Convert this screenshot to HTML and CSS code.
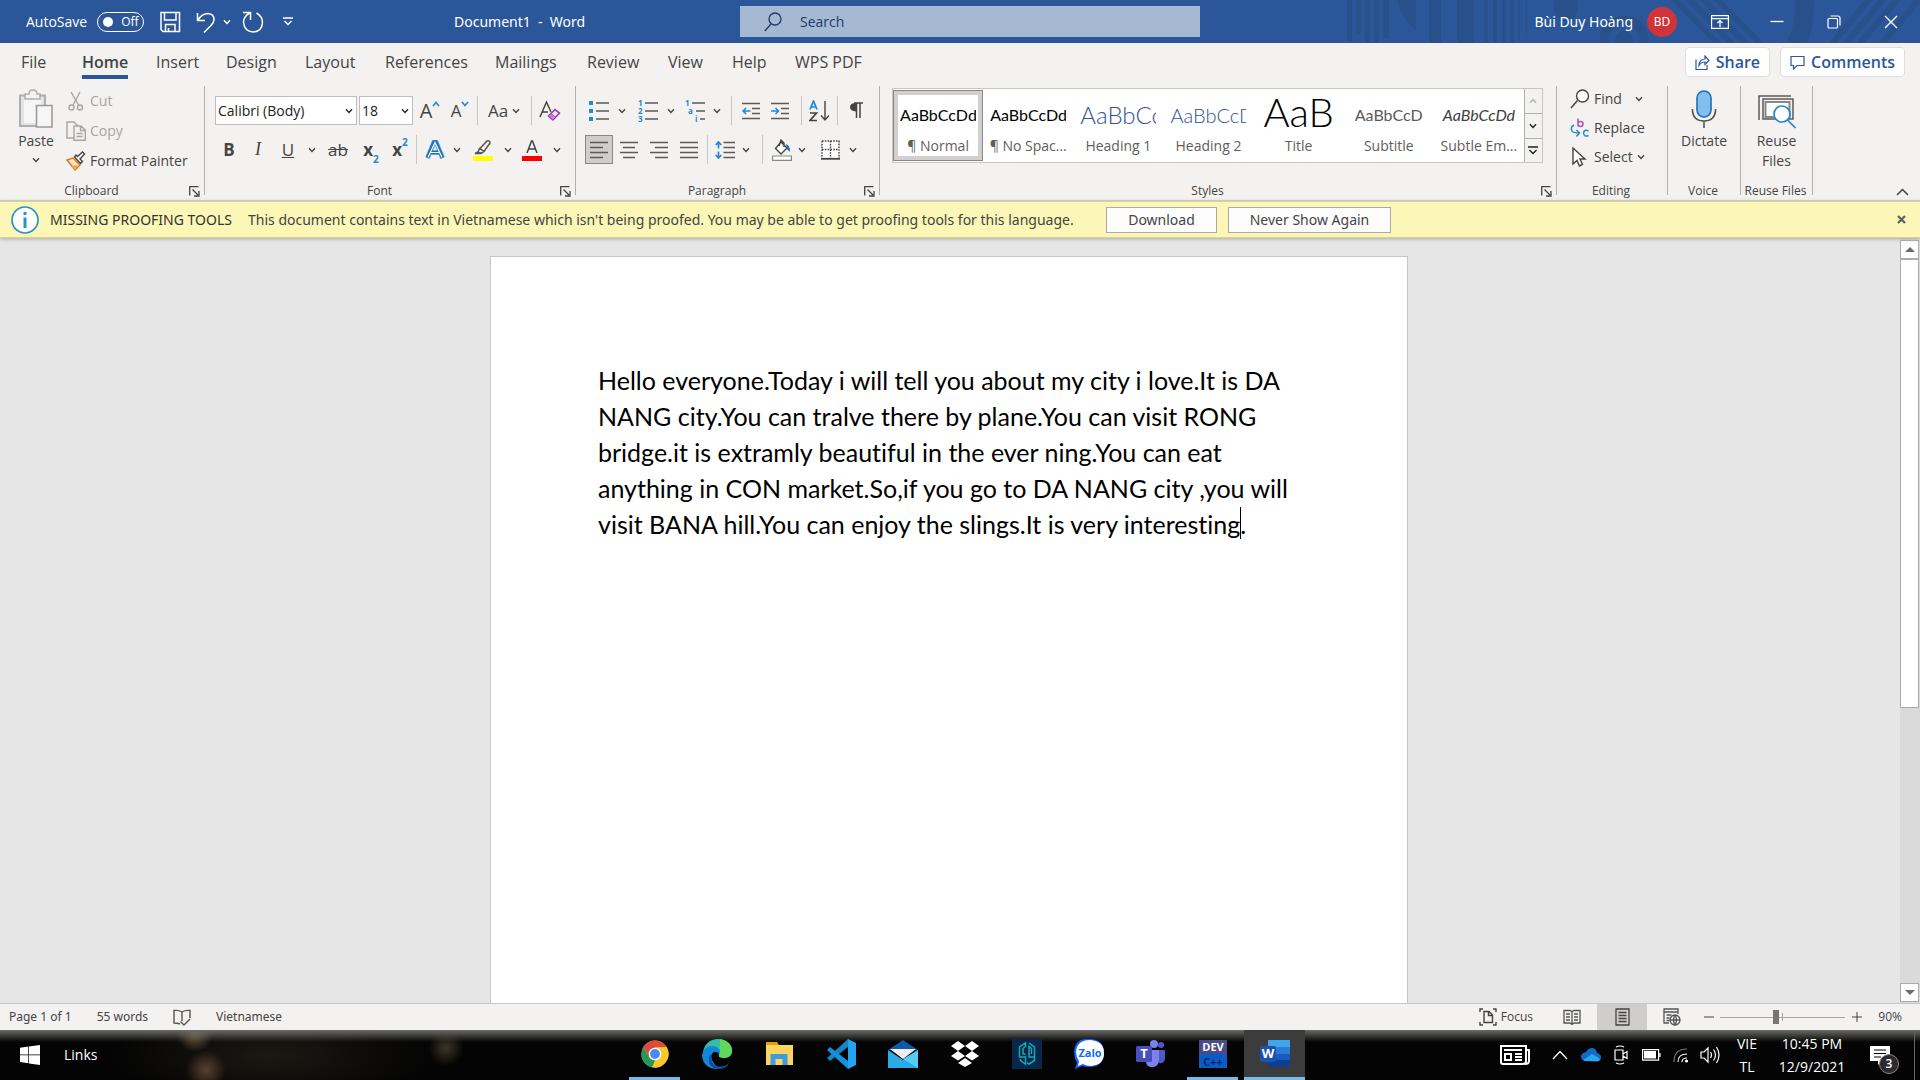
FILE: index.html
```html
<!DOCTYPE html>
<html lang="en">
<head>
<meta charset="utf-8">
<title>Document1 - Word</title>
<link rel="stylesheet" href="styles.css">
</head>
<body>
<svg class="sprite" aria-hidden="true">
  <symbol id="chev" viewBox="0 0 8 6"><path d="M1 1.2 4 4.4 7 1.2" fill="none" stroke="currentColor" stroke-width="1.4"/></symbol>
  <symbol id="launch" viewBox="0 0 11 11"><path d="M.7 9.5V.7h8.800M3.500 3.500l5.500 5.500M10 5v5H5" fill="none" stroke="currentColor" stroke-width="1.300"/></symbol>
</svg>

<header class="titlebar">
  <svg class="pattern" viewBox="0 0 580 43" aria-hidden="true">
    <g fill="#28508a">
      <path d="M7 0h5v41H7zM16 0h5v34h-5zM25 0h5v43h-5zM34 0h5v43h-5zM43 0h6v38h-6zM57 0h19v30Q62 20 57 0zM89 0h12v43H89zM117 0h17v43h-17zM144 0h4v43h-4zM153 0h4v43h-4zM162 0h4v43h-4zM170 0h4v43h-4zM178 0h2v40h-2zM186 0h1v35h-1z"/>
      <path d="M214 0h23q3 18-10 23-15-4-13-23z"/><circle cx="284" cy="40" r="9"/>
    </g>
    <g fill="none" stroke="#28508a">
      <circle cx="284" cy="40" r="20" stroke-width="9"/>
      <path d="M332-4l48 50M346-4l48 50M360-4l48 50M374-4l48 50" stroke-width="6"/>
      <path d="M464-2q2 28-8 47" stroke-width="19"/>
      <path d="M490 46l42-50M504 46l42-50M518 46l42-50M540 46l42-50" stroke-width="6"/>
    </g>
  </svg>
  <div class="quick">
    <label class="autosave">AutoSave <input type="checkbox"><span class="toggle">Off</span></label>
    <button aria-label="Save"><svg width="22" height="22" viewBox="0 0 22 22"><path d="M2 1.500h18.500v19H4l-2-2zM5.500 2v7h11.500V2M6.500 20v-6.500h9.500V20M9.500 20v-3" fill="none" stroke="#fff" stroke-width="1.500"/></svg></button>
    <button aria-label="Undo"><svg width="20" height="22" viewBox="0 0 20 22"><path d="M1.500 2v7.500H9M2 9Q6 2.500 12 2.500q6 .5 6 6 0 3-3 6l-7 7" fill="none" stroke="#fff" stroke-width="1.500"/></svg></button>
    <button aria-label="Undo list"><svg class="chev"><use href="#chev"/></svg></button>
    <button aria-label="Repeat"><svg width="22" height="22" viewBox="0 0 22 22"><path d="M1 1.500h7.500V9M8 2Q1.500 5 1.500 11.500q1 9 9.500 9.500 9-.5 9.500-9.500 0-6-6-9.500" fill="none" stroke="#fff" stroke-width="1.500"/></svg></button>
    <button aria-label="Customize toolbar"><svg width="10" height="9" viewBox="0 0 10 9"><path d="M0 1h10M1.500 4 5 7.500 8.500 4" fill="none" stroke="#fff" stroke-width="1.400"/></svg></button>
  </div>
  <h1 class="doctitle">Document1&nbsp; -&nbsp; Word</h1>
  <label class="search"><svg width="18" height="20" viewBox="0 0 18 20"><circle cx="11" cy="7" r="6" fill="none" stroke="#1c3a6b" stroke-width="1.300"/><path d="M7 12 .800 19" stroke="#1c3a6b" stroke-width="1.300"/></svg><input type="text" placeholder="Search" aria-label="Search"></label>
  <div class="account">
    <span>Bùi Duy Hoàng</span><span class="avatar">BD</span>
  </div>
  <div class="winctl">
    <button aria-label="Ribbon display options"><svg width="18" height="14" viewBox="0 0 18 14" fill="none" stroke="#fff" stroke-width="1.200"><path d="M.6.600h16.800v12.800H.6zM.6 3.600h16.800M9 12V6M6.500 8 9 5.600 11.500 8"/></svg></button>
    <button aria-label="Minimize"><svg width="14" height="14" viewBox="0 0 14 14"><path d="M.5 6.500h13" stroke="#fff" stroke-width="1.300"/></svg></button>
    <button aria-label="Restore"><svg width="14" height="14" viewBox="0 0 14 14" fill="none" stroke="#fff" stroke-width="1.200"><rect x="1" y="3.500" width="9.500" height="9.500" rx="1"/><path d="M3.500 1h7.500q2 0 2 2v7.500"/></svg></button>
    <button aria-label="Close"><svg width="14" height="14" viewBox="0 0 14 14"><path d="M1 1l12 12M13 1 1 13" stroke="#fff" stroke-width="1.300"/></svg></button>
  </div>
</header>

<nav class="tabs">
  <div class="tablist">
    <a href="#">File</a><a href="#" class="active">Home</a><a href="#">Insert</a><a href="#">Design</a><a href="#">Layout</a><a href="#">References</a><a href="#">Mailings</a><a href="#">Review</a><a href="#">View</a><a href="#">Help</a><a href="#">WPS PDF</a>
  </div>
  <div class="tabactions">
    <button class="pill"><svg width="15" height="15" viewBox="0 0 15 15" fill="none" stroke="#2b579a" stroke-width="1.200"><path d="M1 4.500v10h11V10M4 10.500q0-6 6-6.500V1l4 4.500-4 4V7Q6 7 4 10.500z"/></svg>Share</button>
    <button class="pill"><svg width="15" height="15" viewBox="0 0 15 15" fill="none" stroke="#2b579a" stroke-width="1.200"><path d="M1 1.500h13v9H7L3.500 14v-3.500H1z"/></svg>Comments</button>
  </div>
</nav>

<section class="ribbon">
  <div class="group clipboard">
    <div class="clip-body">
      <button class="big paste">
        <svg width="36" height="40" viewBox="0 0 36 40"><path d="M2 6.500h25V37H2z" fill="#e4e3e2" stroke="#aeaeae" stroke-width="2"/><path d="M6 10h17v24H6z" fill="#f6f6f6"/><path d="M7 5h4q0-4 4-4t4 4h3v5H7z" fill="#f3f2f1" stroke="#aeaeae" stroke-width="1.500"/><path d="M18.500 16.500h15.500v21.500H18.500z" fill="#f6f6f6" stroke="#9b9b9b" stroke-width="1.600"/></svg>
        <span>Paste</span><svg class="chev"><use href="#chev"/></svg>
      </button>
      <div class="clip-list">
        <button class="cmd off"><svg width="20" height="20" viewBox="0 0 20 20" fill="none" stroke="#a6a6a6" stroke-width="1.400"><path d="M5 1l7.500 13M14 1 7 14"/><circle cx="5.500" cy="16.500" r="2.500"/><circle cx="14" cy="16.500" r="2.500"/></svg>Cut</button>
        <button class="cmd off"><svg width="20" height="20" viewBox="0 0 20 20" fill="#f3f2f1" stroke="#a6a6a6" stroke-width="1.400"><path d="M1 1h7l3 3v13H1z"/><path d="M8 5h7l4.300 4v10.300H8zM14.500 5v4.500H19M10.500 12.500h6M10.500 15.500h6"/></svg>Copy</button>
        <button class="cmd"><svg width="20" height="20" viewBox="0 0 20 20"><path d="M1 9l6-2 7 7-5 5z" fill="#fbe3c8" stroke="#e07a1c" stroke-width="1.500"/><path d="M5 15l7-1-3 5z" fill="#f0a850"/><path d="M8.500 6l6 6.500 2-2-2.500-2.500 4.500-5-2-2-5 4.500-1.500-1.500z" fill="#fff" stroke="#444" stroke-width="1.400"/></svg>Format Painter</button>
      </div>
    </div>
    <div class="caption"><span>Clipboard</span><button aria-label="Clipboard options"><svg class="launch"><use href="#launch"/></svg></button></div>
  </div>

  <div class="group font">
    <div class="rows">
      <div class="row font-a">
        <span class="combo"><select aria-label="Font"><option>Calibri (Body)</option></select><svg class="chev"><use href="#chev"/></svg></span>
        <span class="combo"><select aria-label="Font size"><option>18</option></select><svg class="chev"><use href="#chev"/></svg></span>
        <button aria-label="Grow font"><span class="glyph g-xl">A</span><svg class="hat" viewBox="0 0 8 6"><path d="M1 5 4 1.500 7 5" fill="none" stroke="#2488d0" stroke-width="1.600"/></svg></button>
        <button aria-label="Shrink font"><span class="glyph g-l">A</span><svg class="hat" viewBox="0 0 8 6"><path d="M1 1 4 4.500 7 1" fill="none" stroke="#2488d0" stroke-width="1.600"/></svg></button>
        <i class="sep"></i>
        <button class="case" aria-label="Change case"><span class="glyph g-l">Aa</span><svg class="chev"><use href="#chev"/></svg></button>
        <i class="sep"></i>
        <button aria-label="Clear formatting"><svg width="22" height="22" viewBox="0 0 22 22"><path d="M1 17 7.500 2 12 12M3.500 12H9" fill="none" stroke="#444" stroke-width="1.500"/><path d="M9.500 16l6.500-6.500 4.500 3.500-6.500 7z" fill="#f3e3f8" stroke="#9b3ab0" stroke-width="1.600"/><path d="M9.500 16l2.500-2.500 4.500 4-2.500 2.500z" fill="#c88ad6" stroke="#9b3ab0"/></svg></button>
      </div>
      <div class="row font-b">
        <button aria-label="Bold"><b class="glyph">B</b></button>
        <button aria-label="Italic"><em class="glyph serif">I</em></button>
        <button aria-label="Underline"><u class="glyph">U</u></button>
        <button aria-label="Underline style"><svg class="chev"><use href="#chev"/></svg></button>
        <button aria-label="Strikethrough"><s class="glyph">ab</s></button>
        <button aria-label="Subscript"><b class="glyph">x</b><sub>2</sub></button>
        <button aria-label="Superscript"><b class="glyph">x</b><sup>2</sup></button>
        <i class="sep"></i>
        <button aria-label="Text effects"><svg width="20" height="20" viewBox="0 0 20 20" fill="none"><path d="M2.500 18 9 2h2l6.500 16M5.500 12.500h9" stroke="#7db9ea" stroke-width="5"/><path d="M2.500 18 9 2h2l6.500 16M5.500 12.500h9" stroke="#1c6fb8" stroke-width="3.600"/><path d="M3 17.500 10 2.500l7 15M6 12.500h8" stroke="#fff" stroke-width="1.200"/></svg></button>
        <button aria-label="Text effects list"><svg class="chev"><use href="#chev"/></svg></button>
        <button aria-label="Highlight colour"><svg width="20" height="22" viewBox="0 0 20 22"><path d="M7 9.500 14 2q3-1 3 2l-6 8.500zM6.500 9.500 5 13l-3 1.500h6l3-2z" fill="#f3f2f1" stroke="#555" stroke-width="1.500"/><path d="M5 12.500l4 1-1 1H2z" fill="#555"/><path d="M0 17h20v5H0z" fill="#ff0"/></svg></button>
        <button aria-label="Highlight list"><svg class="chev"><use href="#chev"/></svg></button>
        <button aria-label="Font colour"><svg width="20" height="22" viewBox="0 0 20 22"><path d="M5 14 9.500 2h1L15 14M6.500 10h7" fill="none" stroke="#444" stroke-width="1.500"/><path d="M0 17h20v5H0z" fill="red"/></svg></button>
        <button aria-label="Font colour list"><svg class="chev"><use href="#chev"/></svg></button>
      </div>
    </div>
    <div class="caption"><span>Font</span><button aria-label="Font options"><svg class="launch"><use href="#launch"/></svg></button></div>
  </div>

  <div class="group para">
    <div class="rows">
      <div class="row para-a">
        <button aria-label="Bullets"><svg width="20" height="20" viewBox="0 0 20 20"><path d="M0 0h4v4H0zM0 8h4v4H0zM0 16h4v4H0z" fill="#2488d0"/><path d="M7 2h13M7 10h13M7 18h13" stroke="#5d5b59" stroke-width="1.500"/></svg></button>
        <button aria-label="Bullet list"><svg class="chev"><use href="#chev"/></svg></button>
        <button aria-label="Numbering"><svg class="nums" width="20" height="22" viewBox="0 0 20 22"><text x="0" y="6">1</text><text x="0" y="14">2</text><text x="0" y="22">3</text><path d="M7 3h13M7 11h13M7 19h13" stroke="#5d5b59" stroke-width="1.500"/></svg></button>
        <button aria-label="Number list"><svg class="chev"><use href="#chev"/></svg></button>
        <button aria-label="Multilevel list"><svg class="nums" width="20" height="22" viewBox="0 0 20 22"><text x="0" y="6">1</text><text x="3" y="14">a</text><text x="10" y="22">i</text><path d="M7 3h13M11 11h9M15 19h5" stroke="#5d5b59" stroke-width="1.500"/></svg></button>
        <button aria-label="Multilevel choices"><svg class="chev"><use href="#chev"/></svg></button>
        <i class="sep"></i>
        <button aria-label="Decrease indent"><svg width="18" height="18" viewBox="0 0 18 18" fill="none" stroke="#5d5b59" stroke-width="1.500"><path d="M0 1.500h18M10 6.500h8M10 11.500h8M0 16.500h18"/><path d="M8.500 9H1M4 6 1 9l3 3" stroke="#2488d0"/></svg></button>
        <button aria-label="Increase indent"><svg width="18" height="18" viewBox="0 0 18 18" fill="none" stroke="#5d5b59" stroke-width="1.500"><path d="M0 1.500h18M10 6.500h8M10 11.500h8M0 16.500h18"/><path d="M0 9h7.500M4.500 6l3 3-3 3" stroke="#2488d0"/></svg></button>
        <i class="sep"></i>
        <button aria-label="Sort"><svg width="20" height="22" viewBox="0 0 20 22" fill="none" stroke-width="1.700"><path d="M1 9.500 4.500 1 8 9.500M2 7h5" stroke="#2488d0"/><path d="M1 13h6.500L1 20.500h7" stroke="#444"/><path d="M16 1v19M12 15.500l4 4.500 4-4.500" stroke="#444" stroke-width="1.400"/></svg></button>
        <i class="sep"></i>
        <button aria-label="Show paragraph marks"><svg width="14" height="17" viewBox="0 0 14 17"><path d="M7 1v8.500Q1 9 1 5t6-4z" fill="#444"/><path d="M5 1h9M7.500 1v15M11 1v15" stroke="#444" stroke-width="1.500"/></svg></button>
      </div>
      <div class="row para-b">
        <button class="on" aria-label="Align left"><svg width="18" height="18" viewBox="0 0 18 18"><path d="M0 1.500h18M0 6.500h13M0 11.500h18M0 16.500h13" stroke="#5d5b59" stroke-width="1.500"/></svg></button>
        <button aria-label="Center"><svg width="18" height="18" viewBox="0 0 18 18"><path d="M0 1.500h18M3 6.500h12M0 11.500h18M3 16.500h12" stroke="#5d5b59" stroke-width="1.500"/></svg></button>
        <button aria-label="Align right"><svg width="18" height="18" viewBox="0 0 18 18"><path d="M0 1.500h18M5 6.500h13M0 11.500h18M5 16.500h13" stroke="#5d5b59" stroke-width="1.500"/></svg></button>
        <button aria-label="Justify"><svg width="18" height="18" viewBox="0 0 18 18"><path d="M0 1.500h18M0 6.500h18M0 11.500h18M0 16.500h18" stroke="#5d5b59" stroke-width="1.500"/></svg></button>
        <i class="sep"></i>
        <button aria-label="Line spacing"><svg width="20" height="18" viewBox="0 0 20 18" fill="none" stroke-width="1.500"><path d="M8.500 1.500H20M8.500 6.500H20M8.500 11.500H20M8.500 16.500H20" stroke="#5d5b59"/><path d="M3.500 1v6.500M.7 4 3.500 1l2.800 3M3.500 10.500V17M.7 14l2.800 3 2.800-3" stroke="#2488d0" stroke-width="1.700"/></svg></button>
        <button aria-label="Line spacing list"><svg class="chev"><use href="#chev"/></svg></button>
        <i class="sep"></i>
        <button aria-label="Shading"><svg width="20" height="22" viewBox="0 0 20 22"><path d="M9 3 3.500 9.500 9 15l6-6zM7 7l2-6 3 3v4" fill="#fff" stroke="#444" stroke-width="1.400"/><path d="M14 5q4 1 4 8l-3-3z" fill="#1c6fb8"/><path d="M.6 17h18.800v4.400H.6z" fill="#fff" stroke="#888" stroke-width="1.200"/></svg></button>
        <button aria-label="Shading list"><svg class="chev"><use href="#chev"/></svg></button>
        <button aria-label="Borders"><svg width="19" height="20" viewBox="0 0 19 20"><path d="M1 1h17v17H1z" fill="#fff"/><path d="M1 1h17v17M1 1v17M9.500 1v17M1 9.500h17" fill="none" stroke="#444" stroke-width="1.400" stroke-dasharray="1.600 1.200"/><path d="M0 18.800h19" stroke="#444" stroke-width="1.800"/></svg></button>
        <button aria-label="Borders list"><svg class="chev"><use href="#chev"/></svg></button>
      </div>
    </div>
    <div class="caption"><span>Paragraph</span><button aria-label="Paragraph options"><svg class="launch"><use href="#launch"/></svg></button></div>
  </div>

  <div class="group styles">
    <div class="gallery">
      <button class="style sel"><span class="demo">AaBbCcDd</span><span>¶ Normal</span></button>
      <button class="style"><span class="demo">AaBbCcDd</span><span>¶ No Spac...</span></button>
      <button class="style"><span class="demo h1">AaBbCc</span><span>Heading 1</span></button>
      <button class="style"><span class="demo h2">AaBbCcD</span><span>Heading 2</span></button>
      <button class="style"><span class="demo title">AaB</span><span>Title</span></button>
      <button class="style"><span class="demo subtitle">AaBbCcD</span><span>Subtitle</span></button>
      <button class="style"><span class="demo subtle">AaBbCcDd</span><span>Subtle Em...</span></button>
      <div class="gallery-nav">
        <button class="off" aria-label="Previous styles"><svg class="chev up"><use href="#chev"/></svg></button>
        <button aria-label="Next styles"><svg class="chev"><use href="#chev"/></svg></button>
        <button aria-label="More styles"><svg width="10" height="9" viewBox="0 0 10 9"><path d="M0 1h10M1.500 4 5 7.500 8.500 4" fill="none" stroke="#222" stroke-width="1.400"/></svg></button>
      </div>
    </div>
    <div class="caption"><span>Styles</span><button aria-label="Style options"><svg class="launch"><use href="#launch"/></svg></button></div>
  </div>

  <div class="group editing">
    <div class="edit-list">
      <button class="cmd"><svg width="20" height="20" viewBox="0 0 20 20"><path d="M7.500 11.500 1 19" stroke="#444" stroke-width="1.500"/><circle cx="12.500" cy="7" r="6" fill="#fff" stroke="#444" stroke-width="1.400"/></svg>Find<svg class="chev far"><use href="#chev"/></svg></button>
      <button class="cmd"><svg width="20" height="20" viewBox="0 0 20 20" fill="none"><path d="M8 .500v8M8 5.500q0-2 2.500-2t2.500 2.500q0 2.500-2.500 2.500T8 6" stroke="#b04fc0" stroke-width="1.500"/><path d="M4 7Q0 9 2 13q1 2 7 2M6.500 12l3 3-3 3.500" stroke="#2488d0" stroke-width="1.500"/><path d="M18.500 13q-4.500-2-5 2 .5 4.500 5 2.500" stroke="#2488d0" stroke-width="1.500"/></svg>Replace</button>
      <button class="cmd"><svg width="20" height="20" viewBox="0 0 20 20"><path d="M3 1v16l4-3.500 2.500 5.500 3-1.500L10 12h5z" fill="#fff" stroke="#444" stroke-width="1.400"/></svg>Select<svg class="chev near"><use href="#chev"/></svg></button>
    </div>
    <div class="caption plain"><span>Editing</span></div>
  </div>

  <div class="group voice">
    <button class="big"><svg width="26" height="40" viewBox="0 0 26 40"><rect x="6" y="2" width="14" height="26" rx="7" fill="#83beec" stroke="#1c6fb8" stroke-width="1.600"/><path d="M1.500 20v2q1 10 11.500 10t11.500-10v-2M13 32v7" fill="none" stroke="#555" stroke-width="1.600"/></svg><span>Dictate</span></button>
    <div class="caption plain"><span>Voice</span></div>
  </div>

  <div class="group reuse">
    <button class="big"><svg width="38" height="40" viewBox="0 0 38 40"><path d="M1 31V7h32M35 10v20H5V10z" fill="none" stroke="#5d5b59" stroke-width="1.500"/><path d="M7.500 13h24v15h-24z" fill="#fff" stroke="#8a8886" stroke-width="2"/><circle cx="24" cy="25" r="8" fill="#fff" stroke="#2488d0" stroke-width="1.700"/><path d="M29.500 31l8 8" stroke="#2488d0" stroke-width="1.700"/></svg><span>Reuse<br>Files</span></button>
    <div class="caption plain"><span>Reuse Files</span></div>
  </div>
  <button class="collapse" aria-label="Collapse ribbon"><svg width="13" height="8" viewBox="0 0 13 8"><path d="M1 7 6.500 1.500 12 7" fill="none" stroke="#444" stroke-width="1.500"/></svg></button>
</section>

<section class="notice">
  <svg width="28" height="28" viewBox="0 0 28 28"><circle cx="14" cy="14" r="13" fill="#fff" stroke="#2e90c8" stroke-width="1.700"/><path d="M14 11.500V22M14 6v3" stroke="#2e90c8" stroke-width="3"/></svg>
  <strong>MISSING PROOFING TOOLS</strong>
  <p>This document contains text in Vietnamese which isn't being proofed. You may be able to get proofing tools for this language.</p>
  <button class="flat">Download</button>
  <button class="flat wide">Never Show Again</button>
  <button class="dismiss" aria-label="Dismiss"><svg width="9" height="9" viewBox="0 0 9 9"><path d="M1 1l7 7M8 1 1 8" stroke="#605e5c" stroke-width="2.200"/></svg></button>
</section>

<main class="workspace">
  <div class="canvas">
    <article class="sheet">
      <p>Hello everyone.Today i will tell you about my city i love.It is DA<br>NANG city.You can tralve there by plane.You can visit RONG<br>bridge.it is extramly beautiful in the ever ning.You can eat<br>anything in CON market.So,if you go to DA NANG city ,you will<br>visit BANA hill.You can enjoy the slings.It is very interesting<span class="caret"></span>.</p>
    </article>
  </div>
  <div class="scroll">
    <button aria-label="Scroll up"><svg width="10" height="5" viewBox="0 0 10 5"><path d="M0 5 5 0l5 5z" fill="#6e6c6a"/></svg></button>
    <div class="track"><div class="thumb"></div></div>
    <button aria-label="Scroll down"><svg width="10" height="5" viewBox="0 0 10 5"><path d="M0 0l5 5 5-5z" fill="#6e6c6a"/></svg></button>
  </div>
</main>

<footer class="status">
  <div class="status-left">
    <span>Page 1 of 1</span><span>55 words</span>
    <svg width="18" height="17" viewBox="0 0 18 17" fill="none" stroke="#555" stroke-width="1.400"><path d="M9 3Q6 1 1 1.500V14q4 0 6 1M9 3q3-2 8-1.500V9M9 3v9M7.500 12.500 11 16l6-6"/></svg>
    <span>Vietnamese</span>
  </div>
  <div class="status-right">
    <button class="focus"><svg width="18" height="18" viewBox="0 0 18 18" fill="none" stroke="#444" stroke-width="1.400"><path d="M4 1H1v3M14 1h3v3M4 17H1v-3M14 17h3v-3M5 3.500h5l3.500 3.500v7.500H5zM9.500 4v3.500H13"/></svg>Focus</button>
    <button class="view" aria-label="Read mode"><svg width="18" height="17" viewBox="0 0 18 17" fill="none" stroke="#555" stroke-width="1.300"><path d="M1 1.500h6l2 1 2-1h6V14h-6l-2 1.500L7 14H1zM9 2v14M3 5h4M3 8h4M3 11h4M11 5h4M11 8h4M11 11h4"/></svg></button>
    <button class="view on" aria-label="Print layout"><svg width="15" height="18" viewBox="0 0 15 18" fill="none" stroke="#444" stroke-width="1.300"><path d="M1 1h13v16H1zM3.500 4.500h8M3.500 7.500h8M3.500 10.500h8M3.500 13.500h8"/></svg></button>
    <button class="view" aria-label="Web layout"><svg width="18" height="18" viewBox="0 0 18 18" fill="none" stroke="#555" stroke-width="1.300"><path d="M6 15H1V1h14v5M1 4h14M3.500 7h5M3.500 10h3M3.500 12.500h3"/><circle cx="12" cy="12" r="5"/><path d="M7 12h10M12 7q-3 5 0 10M12 7q3 5 0 10"/></svg></button>
    <button class="zoombtn" aria-label="Zoom out"><svg width="10" height="10" viewBox="0 0 10 10"><path d="M0 5h10" stroke="#444"/></svg></button>
    <input class="zoom" type="range" min="10" max="190" value="90" aria-label="Zoom">
    <button class="zoombtn" aria-label="Zoom in"><svg width="10" height="10" viewBox="0 0 10 10"><path d="M0 5h10M5 0v10" stroke="#444"/></svg></button>
    <span class="percent">90%</span>
  </div>
</footer>

<footer class="taskbar">
  <div class="start">
    <button aria-label="Start"><svg width="20" height="20" viewBox="0 0 20 20" fill="#fff"><path d="M0 2.800 8.300 1.600v7.900H0zM9 1.500 20 0v9.500H9zM0 10.300h8.300v8L0 17.100zM9 10.300h11V20L9 18.400z"/></svg></button>
    <span>Links</span>
  </div>
  <div class="apps">
    <button class="open" aria-label="Chrome"><svg viewBox="0 0 30 30"><circle cx="15" cy="15" r="13.500" fill="#fbc926"/><path d="M3.300 8.300a13.500 13.500 0 0 1 23.400 0H15l-6 10z" fill="#dd4b3e"/><path d="M3.300 8.300 9.500 19 15 21.500l-3 7A13.500 13.500 0 0 1 3.300 8.300z" fill="#229a57"/><path d="M12 28.200 19 17.500V8.300h7.700A13.500 13.500 0 0 1 12 28.200z" fill="#fbc926"/><circle cx="15" cy="15" r="6.300" fill="#fff"/><circle cx="15" cy="15" r="5" fill="#4a8af4"/></svg></button>
    <button aria-label="Edge"><svg viewBox="0 0 30 30"><path d="M1 14C2 5 8 0 16 0c8 0 14 6 14 12 0 5-4 7-8 7-4 0-6-1-5-4 1-4-2-6-6-6-5 0-8 2-10 5z" fill="#36bfa8"/><path d="M18 0q12 2 12 12 0 5-6 7-4 0-6-1-1-1 0-4z" fill="#5fd95c"/><path d="M0 16Q2 7 10 7q6 0 8 5 0 2-1 3-2-3-5-2-4 2-2 8 3 7 10 8-3 1-6 1Q1 29 0 16z" fill="#1388d8"/><path d="M10 15q-3 9 5 12 7 2 12-3-2 6-11 6Q6 29 7 20q0-4 3-5z" fill="#0c4f9e"/></svg></button>
    <button aria-label="File Explorer"><svg viewBox="0 0 30 30"><path d="M2 3h11l2 3h-3l-2 4H2z" fill="#e2a100"/><path d="M2 6h27v20H2z" fill="#fcd462"/><path d="M6.500 26V15h17v11h-5v-6h-7v6z" fill="#3f9be0"/></svg></button>
    <button aria-label="Visual Studio Code"><svg viewBox="0 0 30 30"><path d="M22 0l8 4v22l-8 4z" fill="#23a4f0"/><path d="M22 0v8L4 22l-3-3z" fill="#1b80c4"/><path d="M1 11l3-3 18 14v8z" fill="#1292dc"/></svg></button>
    <button aria-label="Mail"><svg viewBox="0 0 30 30"><path d="M0 11 15 1l15 10z" fill="#0c59a4"/><path d="M0 11l15 10 15-10v18H0z" fill="#29abe8"/><path d="M30 11v18L15 20z" fill="#55ccf5"/><path d="M2 10h26L15 20z" fill="#eee"/></svg></button>
    <button aria-label="Dropbox"><svg viewBox="0 0 30 30" fill="#fff"><path d="M8 2l7 5-7 5-7-5zM22 2l7 5-7 5-7-5zM8 12l7 5-7 4.500L1 17zM22 12l7 5-7 4.500-7-4.500zM15 19l7 5-7 4-7-4z"/></svg></button>
    <button aria-label="Garena"><svg viewBox="0 0 30 30"><path d="M0 0h30v30H0z" fill="#07274b"/><path d="M13.500 15H11V9.500l2.500-2V4L7.500 8v10h6v7l-5-3.500V20M17 4l5.500 4v10H17V7.500l2.500 2V15M22.500 18v3.500L17 25l-2-1.500" fill="none" stroke="#18a9b4" stroke-width="1.500"/></svg></button>
    <button aria-label="Zalo"><svg viewBox="0 0 30 30"><path d="M0 13Q1 0 13 0h4q13 1 13 14T17 28q-6 0-9-1l-7 3 2-6Q0 19 0 13z" fill="#0c68ff"/><path d="M2 13Q3 1 16 1q14 1 14 13T17 27q-5 0-8-2l-5 2 1-5q-3-4-3-9z" fill="#fff"/><text x="16" y="18" class="zalo">Zalo</text></svg></button>
    <button aria-label="Teams"><svg viewBox="0 0 30 30"><circle cx="25" cy="6" r="3" fill="#5059c9"/><circle cx="18" cy="5" r="4" fill="#7b83eb"/><path d="M21 11h8v9q-1 5-6 4z" fill="#5059c9"/><path d="M10 11h13v11q-1 6-7 6t-6-6z" fill="#7b83eb"/><rect y="7" width="16" height="16" rx="1.500" fill="#4650b8"/><text x="8" y="19" class="logo">T</text></svg></button>
    <button class="open" aria-label="Dev-C++"><svg viewBox="0 0 30 30"><path d="M1 1h28v14H1z" fill="#4b4b86"/><path d="M1 15h28v14H1z" fill="#0b5cc8"/><text x="15" y="12" class="dev">DEV</text><text x="15" y="27" class="dev cpp">C++</text></svg></button>
    <button class="open current" aria-label="Word"><svg viewBox="0 0 30 30"><path d="M8 1h22v7H8z" fill="#41a5ee"/><path d="M8 8h22v7H8z" fill="#2b7cd3"/><path d="M8 15h22v6H8z" fill="#185abd"/><path d="M8 21h22v7H8z" fill="#103f91"/><rect y="7" width="16" height="16" rx="1.500" fill="#1a52ac"/><text x="8" y="19" class="logo">W</text></svg></button>
  </div>
  <div class="tray">
    <svg width="30" height="20" viewBox="0 0 30 20" fill="none" stroke="#fff" stroke-width="2"><path d="M1 1h25v15q0 3-3 3H3q-2 0-2-2zM26 5h3v11q0 3-4 3M4 5h18M15 9h7M15 12h7M15 15h7M5 9h6v6H5z"/></svg>
    <svg width="16" height="10" viewBox="0 0 16 10"><path d="M1 9l7-7.500L15 9" fill="none" stroke="#fff" stroke-width="1.300"/></svg>
    <svg width="20" height="14" viewBox="0 0 20 14"><path d="M4 13q-4-1-4-4.500T5 4q2-4 6-4t5 5q4 1 4 4.500T16 13z" fill="#0f6cc8"/><path d="M4 13l-2-1 9-6 7 4q2 3-2 3.500z" fill="#2aa6ec"/></svg>
    <svg width="14" height="20" viewBox="0 0 14 20" fill="none" stroke="#fff" stroke-width="1.200"><path d="M2 2q4-2 8 0M2 18q4 2 8 0M1 5h8v10H1zM9 9l4-2.500v7L9 11"/></svg>
    <svg width="19" height="12" viewBox="0 0 19 12"><path d="M.6.600h16v10.500H.6zM18 4v4" fill="none" stroke="#fff" stroke-width="1.200"/><path d="M2 2h12v7.500H2z" fill="#fff"/></svg>
    <svg width="16" height="16" viewBox="0 0 16 16" fill="none" stroke="#fff" stroke-width="1.100"><path d="M9 15q0-4 5-4M5 15q0-8 9-8" /><path d="M1 15Q1 2 14 2" stroke="#777"/><circle cx="13.500" cy="14" r="1" fill="#fff"/></svg>
    <svg width="20" height="18" viewBox="0 0 20 18" fill="none" stroke="#fff" stroke-width="1.200"><path d="M1 6h3l4-4v14l-4-4H1zM10.500 6q2 3 0 6M13.500 3.500q4 5.500 0 11M16.500 1q5 8 0 16"/></svg>
    <span class="lang">VIE<br>TL</span>
    <span class="clock">10:45 PM<br>12/9/2021</span>
    <button class="action" aria-label="Notifications"><svg width="20" height="20" viewBox="0 0 20 20"><path d="M0 1h20v15h-8l-4 4v-4H0z" fill="#fff"/><path d="M4 5h12M4 8.500h12M4 12h7" stroke="#000" stroke-width="1.200"/></svg><span class="count">3</span></button>
  </div>
</footer>
</body>
</html>
```
FILE: styles.css
```css
* { box-sizing: border-box; }

body {
  margin: 0;
  min-height: 100vh;
  display: flex;
  flex-direction: column;
  background: #e6e6e6;
  color: #444;
  font: 14px/20px "Open Sans", "Noto Sans", sans-serif;
  overflow: hidden;
}

button, input, select { font: inherit; color: inherit; }
button {
  display: flex;
  align-items: center;
  justify-content: center;
  border: 0;
  padding: 0;
  background: none;
}
svg { display: block; flex: none; }
p { margin: 0; }
.sprite { display: none; }
.chev { width: 8px; height: 6px; }
.chev.up { transform: rotate(180deg); }
.launch { width: 11px; height: 11px; }

/* Title bar */
.titlebar {
  position: relative;
  display: grid;
  grid-template-columns: 454px 286px 460px 1fr 260px;
  align-items: center;
  height: 43px;
  background: #2b579a;
  color: #fff;
}
.pattern { position: absolute; right: 0; top: 0; width: 580px; height: 43px; }
.quick { display: flex; align-items: center; gap: 15px; padding-left: 26px; }
.quick button:nth-of-type(2) { margin-right: -8px; }
.quick button:nth-of-type(3) { margin-right: -4px; }
.quick button:last-child { margin-left: 4px; }
.autosave { display: flex; align-items: center; gap: 10px; }
.autosave input { position: absolute; opacity: 0; }
.toggle {
  display: flex;
  align-items: center;
  gap: 8px;
  width: 47px;
  height: 20px;
  padding-left: 5px;
  border: 1px solid #fff;
  border-radius: 10px;
  font-size: 12px;
}
.toggle::before { content: ""; width: 10px; height: 10px; border-radius: 50%; background: #fff; }
.doctitle { margin: 0; font: 400 14px/20px "Noto Sans", "Open Sans", sans-serif; }
.search {
  display: flex;
  align-items: center;
  gap: 18px;
  height: 31px;
  padding-left: 24px;
  background: #a6b9d3;
}
.search input { flex: 1; min-width: 0; border: 0; padding: 0; background: none; }
.search input::placeholder { color: #1c3a6b; opacity: 1; }
.account { position: relative; display: flex; align-items: center; justify-content: flex-end; gap: 14px; padding-right: 13px; margin-right: -30px; font-family: "Noto Sans", "Open Sans", sans-serif; }
.avatar {
  width: 30px;
  height: 30px;
  border-radius: 50%;
  background: #d13438;
  font-size: 12px;
  line-height: 30px;
  text-align: center;
}
.winctl { position: relative; display: flex; justify-content: flex-end; padding-right: 1px; }
.winctl button { width: 57px; height: 43px; }

/* Tabs */
.tabs { display: flex; justify-content: space-between; height: 41px; padding: 0 15px 0 21px; background: #f3f2f1; }
.tablist { display: grid; grid-template-columns: 61px 74px 70px 79px 80px 110px 92px 81px 64px 63px 80px; font-size: 16px; line-height: 38px; }
.tablist a { justify-self: start; color: #444; text-decoration: none; white-space: nowrap; height: 36px; }
.tablist .active { font-weight: 600; border-bottom: 4px solid #2b579a; }
.tabactions { display: flex; gap: 10px; padding-top: 4px; }
.pill {
  gap: 6px;
  height: 30px;
  padding: 0 9px;
  border: 1px solid #e1dfdd;
  border-radius: 4px;
  background: #fff;
  color: #2b579a;
  font-size: 16px;
  font-weight: 600;
}

/* Ribbon */
.ribbon {
  position: relative;
  display: grid;
  grid-template-columns: 205px 371px 304px 677px 111px 73px 72px 1fr;
  height: 117px;
  padding-top: 2px;
  background: #f3f2f1;
  border-bottom: 1px solid #d2d0ce;
}
.group { display: flex; flex-direction: column; height: 109px; border-right: 1px solid #b3b0ad; }
.caption { display: grid; grid-template-columns: 1fr 15px; align-items: center; margin-top: auto; height: 10px; font-size: 12px; line-height: 12px; text-align: center; white-space: nowrap; }
.caption span { padding-right: 6px; }
.caption.plain { grid-template-columns: 1fr; }
.caption.plain span { padding-right: 2px; }
.caption button { justify-content: flex-start; }
.big { flex-direction: column; align-self: center; gap: 2px; padding-top: 3px; }
.clip-body { display: flex; padding-left: 17px; }
.clip-body .big { width: 38px; align-self: flex-start; }
.clip-body .chev { margin-top: 4px; }
.clip-list { padding-left: 11px; }
.cmd { display: flex; gap: 4px; height: 29px; white-space: nowrap; }
.clip-list .cmd { height: 30px; }
.cmd.off { color: #a6a6a6; }
.cmd .far { margin-left: 9px; }
.edit-list { padding: 0 0 0 13px; margin-top: -2px; }
.rows { display: grid; gap: 10px; padding: 10px 0 0 9px; }
.font .rows { padding-left: 10px; }
.row { display: grid; height: 29px; }
.font-a { grid-template-columns: 144px 56px 30px 30px 4px 50px 4px 34px; }
.font-b { grid-template-columns: 28px 30px 30px 18px 34px 32px 26px 6px 32px 12px 40px 10px 38px 12px; }
.para-a { grid-template-columns: 28px 18px 34px 12px 36px 8px 20px 20px 38px 4px 32px 4px 34px; }
.para-b { grid-template-columns: 28px 32px 28px 32px 4px 32px 10px 22px 18px 22px 34px 12px; }
.sep { justify-self: center; width: 1px; background: #c8c6c4; }
.on { background: #cfcecd; }
.row .on { border: 1px solid #8a8886; }
.combo { position: relative; margin-right: 2px; }
.combo select {
  width: 100%;
  height: 29px;
  padding: 0 2px;
  appearance: none;
  border: 1px solid #c0bebc;
  border-radius: 0;
  background: #fff;
  color: #222;
}
.combo .chev { position: absolute; right: 4px; top: 12px; color: #222; }
.glyph { font-size: 17px; line-height: 29px; }
.g-xl { font-size: 20px; }
.g-l { font-size: 17px; }
.serif { font-family: "Liberation Serif", serif; font-size: 18px; }
.hat { width: 8px; height: 6px; align-self: flex-start; margin-top: 5px; }
.case { gap: 4px; }
sub, sup { color: #2488d0; font-size: 10px; font-weight: 700; line-height: 10px; }
sub { align-self: flex-end; }
sup { align-self: flex-start; margin-top: 2px; }
.nums { overflow: visible; }
.nums text { font: 700 8px "Open Sans", sans-serif; fill: #2488d0; }

.gallery { display: flex; height: 75px; margin: 2px 13px 0 12px; border: 1px solid #c8c6c4; background: #fff; }
.style { flex: 1; min-width: 0; display: grid; grid-template-rows: 46px 18px; justify-items: center; justify-content: center; margin: 1px 0; color: #605e5c; border: 1px solid transparent; white-space: nowrap; }
.style.sel { border-color: #8a8886; box-shadow: inset 0 0 0 4px #d2d0ce; }
.demo { width: 76px; height: 46px; overflow: hidden; color: #000; font: 16px/48px Lato, sans-serif; }
.h1 { font-size: 24px; font-weight: 300; color: #2f5496; }
.h2 { font-size: 20px; font-weight: 300; color: #2f5496; }
.title { font-size: 40px; font-weight: 300; line-height: 42px; }
.subtitle { color: #5a5a5a; }
.subtle { color: #404040; font-style: italic; }
.gallery-nav { width: 18px; display: grid; grid-template-rows: repeat(3, 1fr); color: #222; }
.gallery-nav button { border: solid #b3b0ad; border-width: 1px 0 0 1px; background: #f3f2f1; }
.gallery-nav .off { color: #b3b0ad; border-top: 0; }
.collapse { position: absolute; right: 11px; bottom: 4px; }

/* Notice bar */
.notice {
  display: flex;
  align-items: center;
  gap: 11px;
  height: 37px;
  padding: 0 14px 0 11px;
  background: #fcf7b6;
  border: solid #d8d48c;
  border-width: 1px 0;
  box-shadow: 0 1px 4px #aaa;
  z-index: 1;
  white-space: nowrap;
  font-family: "Noto Sans", "Open Sans", sans-serif;
}
.notice strong { width: 187px; font-weight: 400; color: #333; }
.flat { height: 26px; width: 111px; border: 1px solid #acaaa8; background: #fdfdfd; }
.notice p { width: 847px; }
.wide { width: 163px; }
.dismiss { margin-left: auto; }

/* Document */
.workspace { flex: 1; display: flex; min-height: 0; }
.canvas { flex: 1; display: flex; justify-content: center; padding: 18px 2px 0 0; overflow: hidden; }
.sheet { width: 918px; padding: 105px 0 0 107px; background: #fff; border: 1px solid #c6c6c6; border-bottom: 0; color: #000; font: 25px/36px Lato, Carlito, sans-serif; font-variant-ligatures: none; white-space: nowrap; }
.caret { position: relative; }
.caret::after { content: ""; position: absolute; left: 0; top: -2px; width: 1px; height: 32px; background: #000; }
.scroll { width: 20px; display: flex; flex-direction: column; padding: 2px 1px 1px 0; background: #dadada; }
.scroll button { height: 19px; background: #fff; border: 1px solid #ababab; }
.track { flex: 1; }
.thumb { height: 62%; background: #fff; border: 1px solid #ababab; }

/* Status bar */
.status { display: flex; justify-content: space-between; height: 27px; border-top: 1px solid #c6c6c6; background: #f3f2f1; font-size: 12px; }
.status-left, .status-right { display: flex; align-items: center; }
.status-left { gap: 25px; padding-left: 9px; font-family: "Noto Sans", "Open Sans", sans-serif; }
.status-right { padding-right: 18px; }
.focus { gap: 4px; margin-right: 14px; }
.view { width: 50px; height: 26px; }
.zoombtn { width: 23px; }
.zoom {
  appearance: none;
  width: 125px;
  height: 20px;
  margin: 0;
  background: linear-gradient(#a8a6a4, #a8a6a4) center / 100% 1px no-repeat, linear-gradient(#a8a6a4, #a8a6a4) center / 1px 8px no-repeat;
}
.zoom::-webkit-slider-thumb { appearance: none; width: 6px; height: 14px; background: #777573; }
.percent { width: 34px; text-align: right; }

/* Taskbar */
.taskbar {
  display: grid;
  grid-template-columns: 624px 682px 1fr;
  height: 50px;
  background:
    linear-gradient(#6b6b69, transparent 12px),
    radial-gradient(circle at 195px 4px, #6b5a3c, transparent 18px),
    radial-gradient(circle at 206px 40px, #5a4030, transparent 20px),
    radial-gradient(circle at 446px 18px, #3d3425, transparent 18px),
    radial-gradient(ellipse 160px 50px at 270px 25px, #1c1813, transparent),
    #040404;
  color: #fff;
}
.start { display: flex; align-items: center; gap: 24px; padding-left: 20px; }
.apps { display: flex; gap: 1px; }
.apps button { width: 61px; border-bottom: 3px solid transparent; }
.apps svg { width: 30px; height: 30px; }
.apps .open { background: linear-gradient(#76b9ed, #76b9ed) center 47px / 51px 3px no-repeat; background-origin: border-box; background-clip: border-box; }
.apps .current { background: #3c3c3c; border-bottom-color: #76b9ed; }
.zalo, .logo, .dev { text-anchor: middle; font: 700 11px "Open Sans", sans-serif; fill: #0c68ff; }
.logo { fill: #fff; font-size: 13px; }
.dev { fill: #fff; font-size: 11px; }
.cpp { fill: #06295f; }
.tray {
  display: grid;
  grid-template-columns: 50px 40px 22px 38px 22px 38px 20px 54px 76px 60px;
  align-items: center;
  justify-items: center;
  justify-content: end;
  margin-right: 5px;
  padding-right: 4px;
  border-right: 1px solid #666;
}
.lang, .clock { line-height: 23px; text-align: center; white-space: nowrap; }
.action { position: relative; }
.count { position: absolute; left: 9px; top: 9px; width: 20px; height: 20px; border: 1px solid #888; border-radius: 50%; background: #2b2b2b; font-size: 12px; font-weight: 600; line-height: 18px; }
```
